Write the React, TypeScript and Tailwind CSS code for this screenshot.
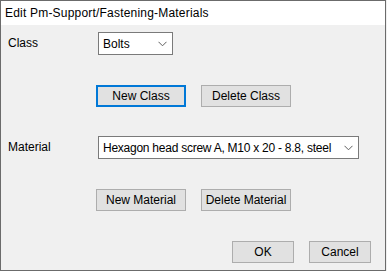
import React from 'react';

const font = { fontFamily: '"Segoe UI", "Liberation Sans", Arial, sans-serif' };

function Chevron() {
    return (
        <svg width="9" height="6" viewBox="0 0 9 6" className="shrink-0">
            <path d="M0.5 0.8 L4.5 4.8 L8.5 0.8" fill="none" stroke="#5f5f5f" strokeWidth="1" />
        </svg>
    );
}

function Combo({ value, width, tight = false }: { value: string; width: string; tight?: boolean }) {
    return (
        <div className={`${width} h-[23px] bg-white border border-[#7a7a7a] flex items-center pl-[4px] pr-[5px] justify-between`}>
            <span className={`text-[12px] text-black leading-none whitespace-nowrap ${tight ? 'tracking-[-0.25px]' : ''}`}>{value}</span>
            <Chevron />
        </div>
    );
}

function Btn({ label, width = 'w-[90px]', focused = false }: { label: string; width?: string; focused?: boolean }) {
    return (
        <button
            className={`${width} h-[22px] bg-[#e1e1e1] text-[12px] text-black leading-none flex items-center justify-center ${focused ? 'border-2 border-[#0078d7]' : 'border border-[#adadad]'
                }`}
        >
            {label}
        </button>
    );
}

export default function App() {
    return (
        <div className="w-[387px] h-[271px] bg-[#f0f0f0]" style={font}>
            <div className="w-[386px] h-[271px] border border-[#6b6b6b] flex flex-col">
                {/* Title bar */}
                <div className="h-[24px] bg-white flex items-center pl-[4px] text-[12px] tracking-[0.2px] text-black">
                    Edit Pm-Support/Fastening-Materials
                </div>

                {/* Body */}
                <div className="flex-1 bg-[#f0f0f0] pt-[7px] pl-[7px] pr-[14px] flex flex-col">
                    <div className="flex items-start">
                        <div className="w-[90px] text-[12px] text-black pt-[2px]">Class</div>
                        <Combo value="Bolts" width="w-[75px]" />
                    </div>

                    <div className="flex gap-[15px] ml-[88px] mt-[30px]">
                        <Btn label="New Class" focused />
                        <Btn label="Delete Class" />
                    </div>

                    <div className="flex items-start mt-[29px]">
                        <div className="w-[90px] text-[12px] text-black pt-[2px]">Material</div>
                        <Combo value="Hexagon head screw A, M10 x 20 - 8.8, steel" width="w-[261px]" tight />
                    </div>

                    <div className="flex gap-[15px] ml-[88px] mt-[30px]">
                        <Btn label="New Material" />
                        <Btn label="Delete Material" />
                    </div>

                    <div className="flex gap-[15px] justify-end mt-[30px]">
                        <Btn label="OK" width="w-[62px]" />
                        <Btn label="Cancel" width="w-[62px]" />
                    </div>
                </div>
            </div>
        </div>
    );
}
